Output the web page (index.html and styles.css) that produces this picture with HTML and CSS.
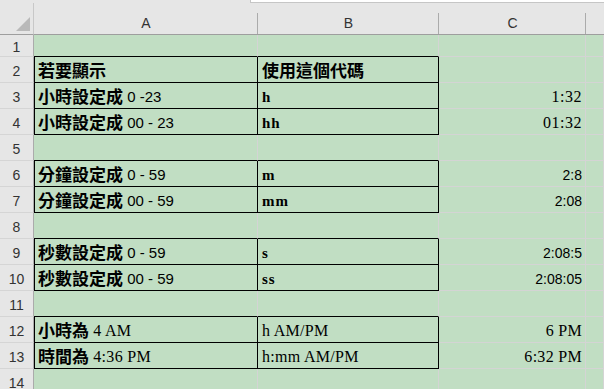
FILE: index.html
```html
<!DOCTYPE html>
<html>
<head>
<meta charset="utf-8">
<link rel="stylesheet" href="styles.css">
</head>
<body>
<div class="sheet">
  <div class="topbar"><div class="tb-left"></div><div class="tb-right"></div></div>
  <div class="grid">
    <div class="corner"><svg width="14" height="14" viewBox="0 0 14 14"><polygon points="0,14 14,0 14,14" fill="#b9b9b9"/></svg></div>
    <div class="ch">A</div><div class="ch">B</div><div class="ch">C</div><div class="ch chd"></div>

    <div class="rh">1</div><div class="c bb"></div><div class="c bb"></div><div class="c"></div><div class="c"></div>

    <div class="rh">2</div>
    <div class="c a bx bl"><span class="cj">若要顯示</span></div>
    <div class="c b bx"><span class="cj">使用這個代碼</span></div>
    <div class="c"></div><div class="c"></div>

    <div class="rh">3</div>
    <div class="c a bx bl"><span class="cj">小時設定成</span><span class="sn">&nbsp;0 -23</span></div>
    <div class="c b bx"><span class="sb">h</span></div>
    <div class="c r"><span class="sf">1:32</span></div><div class="c"></div>

    <div class="rh">4</div>
    <div class="c a bx bl"><span class="cj">小時設定成</span><span class="sn">&nbsp;00 - 23</span></div>
    <div class="c b bx"><span class="sb">hh</span></div>
    <div class="c r"><span class="sf">01:32</span></div><div class="c"></div>

    <div class="rh">5</div><div class="c bb"></div><div class="c bb"></div><div class="c"></div><div class="c"></div>

    <div class="rh">6</div>
    <div class="c a bx bl"><span class="cj">分鐘設定成</span><span class="sn">&nbsp;0 - 59</span></div>
    <div class="c b bx"><span class="sb">m</span></div>
    <div class="c r"><span class="sn2">2:8</span></div><div class="c"></div>

    <div class="rh">7</div>
    <div class="c a bx bl"><span class="cj">分鐘設定成</span><span class="sn">&nbsp;00 - 59</span></div>
    <div class="c b bx"><span class="sb">mm</span></div>
    <div class="c r"><span class="sn2">2:08</span></div><div class="c"></div>

    <div class="rh">8</div><div class="c bb"></div><div class="c bb"></div><div class="c"></div><div class="c"></div>

    <div class="rh">9</div>
    <div class="c a bx bl"><span class="cj">秒數設定成</span><span class="sn">&nbsp;0 - 59</span></div>
    <div class="c b bx"><span class="sb">s</span></div>
    <div class="c r"><span class="sn2">2:08:5</span></div><div class="c"></div>

    <div class="rh">10</div>
    <div class="c a bx bl"><span class="cj">秒數設定成</span><span class="sn">&nbsp;00 - 59</span></div>
    <div class="c b bx"><span class="sb">ss</span></div>
    <div class="c r"><span class="sn2">2:08:05</span></div><div class="c"></div>

    <div class="rh">11</div><div class="c bb"></div><div class="c bb"></div><div class="c"></div><div class="c"></div>

    <div class="rh">12</div>
    <div class="c a bx bl"><span class="cj">小時為</span><span class="sw">&nbsp;4 AM</span></div>
    <div class="c b bx"><span class="sw">h AM/PM</span></div>
    <div class="c r"><span class="sw">6 PM</span></div><div class="c"></div>

    <div class="rh">13</div>
    <div class="c a bx bl"><span class="cj">時間為</span><span class="sw">&nbsp;4:36 PM</span></div>
    <div class="c b bx"><span class="sw">h:mm AM/PM</span></div>
    <div class="c r"><span class="sw">6:32 PM</span></div><div class="c"></div>

    <div class="rh">14</div><div class="c"></div><div class="c"></div><div class="c"></div><div class="c"></div>
  </div>
</div>
</body>
</html>
```

FILE: styles.css
```css
* { box-sizing: border-box; }
html, body { margin: 0; padding: 0; }
body {
  width: 604px;
  height: 389px;
  overflow: hidden;
  background: #c1dec3;
  font-family: "Liberation Sans", Arial, sans-serif;
}
.sheet { width: 604px; height: 389px; overflow: hidden; }
.topbar { display: flex; height: 3px; }
.tb-left { width: 250px; background: #e6e6e6; border-bottom: 1px solid #e6e6e6; }
.tb-right { flex: 1; background: #ffffff; border-bottom: 1px solid #c6c6c6; border-left: 1px solid #c6c6c6; }
.grid {
  display: grid;
  grid-template-columns: 34px 224px 181px 147px 1fr;
  grid-template-rows: 32px 22px repeat(13, 26px);
}
.corner {
  background: #e6e6e6;
  border-bottom: 1px solid #9e9e9e;
  border-right: 1px solid #c8c8c8;
  display: flex;
  align-items: flex-end;
  justify-content: flex-end;
  padding: 0 3px 3px 0;
}
.corner svg { display: block; }
.ch {
  background: linear-gradient(#ababab, #ababab) right bottom / 1px 21px no-repeat, #e6e6e6;
  border-bottom: 1px solid #9e9e9e;
  display: flex;
  align-items: center;
  justify-content: center;
  padding-top: 8px;
  font-size: 14px;
  color: #333;
}
.chd { background: #e6e6e6; }
.rh {
  background: #e6e6e6;
  border-right: 1px solid #ababab;
  border-bottom: 1px solid #d5d5d5;
  display: flex;
  align-items: center;
  justify-content: center;
  padding-top: 3px;
  font-size: 14px;
  color: #333;
}
.c {
  border-right: 1px solid #d4d4d4;
  border-bottom: 1px solid #d4d4d4;
  display: flex;
  align-items: flex-end;
  padding: 0 3px 1px 4px;
  white-space: nowrap;
  overflow: hidden;
  color: #000;
}
.c.r { justify-content: flex-end; }
.c.bb { border-bottom-color: #000; }
.c.bx { border-right-color: #000; border-bottom-color: #000; }
.c.bl { box-shadow: inset 1px 0 0 #000; }
.c.b { padding-left: 4px; }
.cj {
  font-family: "Noto Sans CJK TC", "Noto Sans CJK SC", sans-serif;
  font-weight: 700;
  font-size: 17px;
  line-height: 22px;
}
.sn {
  font-family: "Liberation Sans", Arial, sans-serif;
  font-size: 15px;
  line-height: 20px;
}
.sn2 {
  font-family: "Liberation Sans", Arial, sans-serif;
  font-size: 14px;
  line-height: 20px;
}
.sb {
  font-family: "Liberation Serif", "Times New Roman", serif;
  font-weight: 700;
  font-size: 15px;
  letter-spacing: 1px;
  line-height: 20px;
}
.sf {
  font-family: "Liberation Serif", "Times New Roman", serif;
  font-size: 16px;
  letter-spacing: 0.5px;
  line-height: 20px;
}
.sw {
  font-family: "Liberation Serif", "Times New Roman", serif;
  font-size: 16px;
  letter-spacing: 0.3px;
  line-height: 20px;
}
```
